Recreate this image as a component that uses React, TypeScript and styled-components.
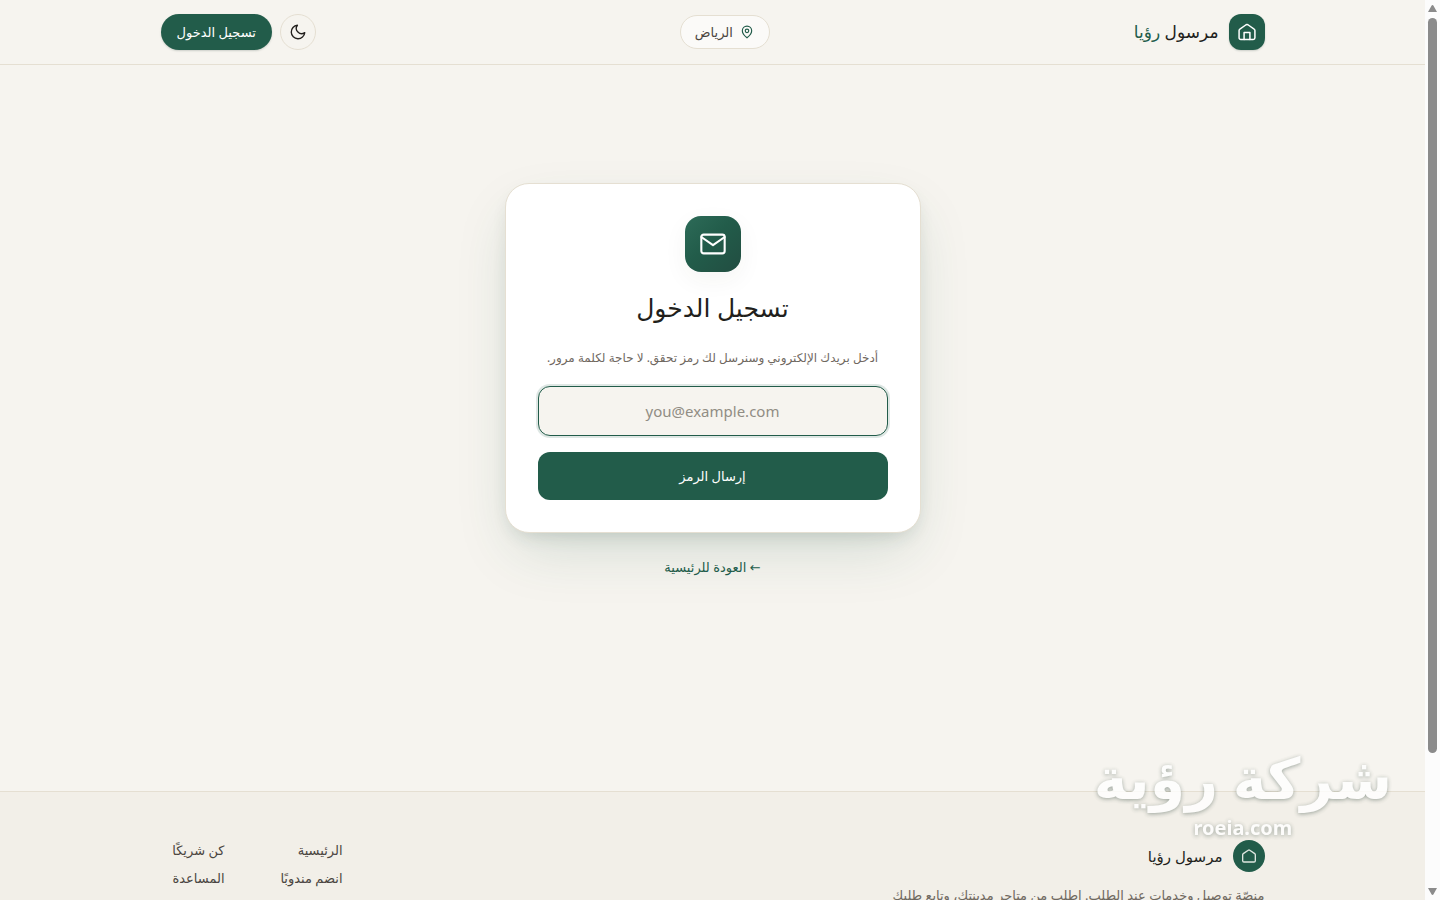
import React from "react";
import styled, { createGlobalStyle } from "styled-components";

const color = {
  page: "#f6f4ef",
  footer: "#f2efe8",
  line: "#e5dfd2",
  green: "#225c4a",
  ink: "#221f1c",
  body: "#4a4540",
  muted: "#6f685f",
};

const GlobalStyle = createGlobalStyle`
  *, *::before, *::after { box-sizing: border-box; }
  body {
    margin: 0;
    background: ${color.page};
    color: ${color.ink};
    font-family: "Noto Sans", "DejaVu Sans", sans-serif;
    font-size: 13px;
    line-height: 20px;
  }
  button, input { font: inherit; }
  a { color: inherit; text-decoration: none; }
  h1, p, ul { margin: 0; padding: 0; }
  ul { list-style: none; }
`;

const Viewport = styled.div`
  display: grid;
  grid-template-columns: minmax(0, 1fr) 15px;
  height: 100vh;
`;

const Page = styled.div`
  overflow: hidden;
`;

const Container = styled.div`
  max-width: 1152px;
  margin: 0 auto;
  padding: 0 24px;
`;

const Header = styled.header`
  border-bottom: 1px solid ${color.line};
`;

const HeaderRow = styled(Container)`
  display: flex;
  align-items: center;
  justify-content: space-between;
  height: 64px;
`;

const Brand = styled.a<{ $small?: boolean }>`
  display: flex;
  align-items: center;
  gap: 10px;
  font-size: ${(p) => (p.$small ? 15 : 17)}px;
  line-height: 24px;
`;

const BrandAccent = styled.span`
  color: ${color.green};
`;

const BrandMark = styled.span<{ $round?: boolean }>`
  display: grid;
  place-items: center;
  width: ${(p) => (p.$round ? 32 : 36)}px;
  height: ${(p) => (p.$round ? 32 : 36)}px;
  border-radius: ${(p) => (p.$round ? 16 : 12)}px;
  background: ${color.green};
  color: ${(p) => (p.$round ? "#dfe6e0" : "#fff")};
  box-shadow: ${(p) => (p.$round ? "none" : "0 1px 2px rgba(34, 60, 50, 0.2)")};
`;

const CityButton = styled.button`
  display: flex;
  align-items: center;
  gap: 7px;
  height: 34px;
  padding: 0 15px 0 14px;
  border: 1px solid ${color.line};
  border-radius: 17px;
  background: #fbfaf8;
  color: ${color.body};
  svg { color: ${color.green}; }
`;

const Actions = styled.div`
  display: flex;
  align-items: center;
  gap: 8px;
`;

const ThemeButton = styled.button`
  display: grid;
  place-items: center;
  width: 36px;
  height: 36px;
  padding: 0;
  border: 1px solid ${color.line};
  border-radius: 18px;
  background: transparent;
  color: ${color.ink};
`;

const LoginLink = styled.a`
  display: flex;
  align-items: center;
  height: 36px;
  padding: 0 16px;
  border-radius: 18px;
  background: ${color.green};
  color: #fff;
  box-shadow: 0 1px 2px rgba(34, 60, 50, 0.2);
`;

const Main = styled.main`
  display: flex;
  flex-direction: column;
  align-items: center;
  justify-content: center;
  min-height: 70vh;
  padding: 0 16px;
`;

const Card = styled.form`
  display: flex;
  flex-direction: column;
  align-items: center;
  width: 100%;
  max-width: 416px;
  padding: 32px;
  border: 1px solid ${color.line};
  border-radius: 24px;
  background: #fff;
  text-align: center;
  box-shadow: 0 24px 60px -12px rgba(34, 92, 74, 0.18), 0 8px 20px -8px rgba(34, 60, 50, 0.2);
`;

const MailBadge = styled.span`
  display: grid;
  place-items: center;
  width: 56px;
  height: 56px;
  border-radius: 16px;
  background: linear-gradient(135deg, #2d6b58, #225c4a 45%, #224d41);
  color: #fff;
  box-shadow: 0 8px 24px rgba(60, 60, 40, 0.05);
`;

const Title = styled.h1`
  margin-top: 18px;
  font-size: 25px;
  font-weight: 400;
  line-height: 34px;
`;

const Lead = styled.p`
  margin-top: 24px;
  color: ${color.muted};
  font-size: 12px;
  line-height: 20px;
`;

const EmailInput = styled.input`
  width: 100%;
  height: 50px;
  margin-top: 18px;
  padding: 0 16px;
  border: 1px solid ${color.green};
  border-radius: 12px;
  outline: none;
  background: ${color.page};
  color: ${color.ink};
  font-size: 15px;
  text-align: center;
  box-shadow: 0 0 0 2px rgba(34, 92, 74, 0.15);
  &::placeholder { color: #918d84; opacity: 1; }
`;

const SubmitButton = styled.button`
  width: 100%;
  height: 48px;
  margin-top: 16px;
  border: 0;
  border-radius: 12px;
  background: ${color.green};
  color: #fff;
`;

const BackLink = styled.a`
  margin-top: 24px;
  color: ${color.green};
`;

const Footer = styled.footer`
  margin-top: 96px;
  padding: 48px 0;
  border-top: 1px solid ${color.line};
  background: ${color.footer};
`;

const FooterRow = styled(Container)`
  display: flex;
  justify-content: space-between;
`;

const About = styled.div`
  max-width: 384px;
`;

const AboutText = styled.p`
  margin-top: 12px;
  color: ${color.muted};
  line-height: 22px;
`;

const FooterLinks = styled.ul`
  display: grid;
  grid-template-columns: 64px 64px;
  column-gap: 54px;
  row-gap: 8px;
  align-content: start;
  color: ${color.body};
  white-space: nowrap;
`;

const Watermark = styled.div`
  position: fixed;
  right: 48px;
  bottom: 60px;
  display: flex;
  flex-direction: column;
  align-items: center;
  gap: 7px;
  color: #fff;
  font-weight: 700;
  opacity: 0.8;
  text-shadow: 0 1px 4px rgba(60, 80, 70, 0.6);
  pointer-events: none;
`;

const WatermarkName = styled.span`
  font-size: 57px;
  line-height: 64px;
`;

const WatermarkSite = styled.span`
  font-size: 20px;
  line-height: 24px;
`;

const ScrollTrack = styled.div`
  display: flex;
  flex-direction: column;
  align-items: center;
  padding: 5px 0;
  background: #fcfcfc;
  color: #8b8b8b;
`;

const ScrollSpace = styled.div`
  display: flex;
  flex: 1;
  flex-direction: column;
  width: 9px;
  padding: 6px 0 5px;
`;

const ScrollThumb = styled.div`
  height: 85%;
  border-radius: 5px;
  background: #8b8b8b;
`;

type IconProps = { size: number; width?: number; children: React.ReactNode };

const Icon = ({ size, width = 2, children }: IconProps) => (
  <svg
    width={size}
    height={size}
    viewBox="0 0 24 24"
    fill="none"
    stroke="currentColor"
    strokeWidth={width}
    strokeLinecap="round"
    strokeLinejoin="round"
    aria-hidden="true"
  >
    {children}
  </svg>
);

const HouseOutline = () => (
  <path d="M2.5 10.2a2 2 0 0 1 .9-1.7l7.5-5.2a2 2 0 0 1 2.2 0l7.5 5.2a2 2 0 0 1 .9 1.7V19a2 2 0 0 1-2 2h-15a2 2 0 0 1-2-2Z" />
);

const Arrow = ({ down }: { down?: boolean }) => (
  <svg width="9" height="7" viewBox="0 0 9 7" fill="currentColor" aria-hidden="true">
    <path d={down ? "M0 0h9L5.5 6.3a1.1 1.1 0 0 1-2 0Z" : "M0 7h9L5.5.7a1.1 1.1 0 0 0-2 0Z"} />
  </svg>
);

const footerLinks = ["الرئيسية", "كن شريكًا", "انضم مندوبًا", "المساعدة"];

export default function App() {
  return (
    <>
      <GlobalStyle />
      <Viewport>
        <Page dir="rtl" lang="ar">
          <Header>
            <HeaderRow>
              <Brand href="#home">
                <BrandMark>
                  <Icon size={20} width={1.8}>
                    <HouseOutline />
                    <path d="M8.5 21v-8.5h7V21" />
                  </Icon>
                </BrandMark>
                <span>
                  مرسول <BrandAccent>رؤيا</BrandAccent>
                </span>
              </Brand>
              <CityButton type="button">
                <Icon size={14}>
                  <path d="M20 10c0 6-8 12-8 12s-8-6-8-12a8 8 0 0 1 16 0Z" />
                  <circle cx="12" cy="10" r="3" />
                </Icon>
                الرياض
              </CityButton>
              <Actions>
                <ThemeButton type="button" aria-label="الوضع الداكن">
                  <Icon size={18} width={1.8}>
                    <path d="M21 12.79A9 9 0 1 1 11.21 3 7 7 0 0 0 21 12.79z" />
                  </Icon>
                </ThemeButton>
                <LoginLink href="#login">تسجيل الدخول</LoginLink>
              </Actions>
            </HeaderRow>
          </Header>

          <Main>
            <Card onSubmit={(e) => e.preventDefault()}>
              <MailBadge>
                <Icon size={28} width={1.8}>
                  <rect x="2" y="4" width="20" height="16" rx="2" />
                  <path d="m2 6 10 7 10-7" />
                </Icon>
              </MailBadge>
              <Title>تسجيل الدخول</Title>
              <Lead>أدخل بريدك الإلكتروني وسنرسل لك رمز تحقق. لا حاجة لكلمة مرور.</Lead>
              <EmailInput
                type="email"
                dir="ltr"
                placeholder="you@example.com"
                aria-label="البريد الإلكتروني"
              />
              <SubmitButton type="submit">إرسال الرمز</SubmitButton>
            </Card>
            <BackLink href="#home">← العودة للرئيسية</BackLink>
          </Main>

          <Footer>
            <FooterRow>
              <About>
                <Brand href="#home" $small>
                  <BrandMark $round>
                    <Icon size={16}>
                      <HouseOutline />
                    </Icon>
                  </BrandMark>
                  مرسول رؤيا
                </Brand>
                <AboutText>منصّة توصيل وخدمات عند الطلب. اطلب من متاجر مدينتك، وتابع طلبك</AboutText>
              </About>
              <FooterLinks>
                {footerLinks.map((label) => (
                  <li key={label}>
                    <a href="#page">{label}</a>
                  </li>
                ))}
              </FooterLinks>
            </FooterRow>
          </Footer>
        </Page>
        <ScrollTrack aria-hidden="true">
          <Arrow />
          <ScrollSpace>
            <ScrollThumb />
          </ScrollSpace>
          <Arrow down />
        </ScrollTrack>
      </Viewport>
      <Watermark dir="rtl" lang="ar">
        <WatermarkName>شركة رؤية</WatermarkName>
        <WatermarkSite>roeia.com</WatermarkSite>
      </Watermark>
    </>
  );
}
